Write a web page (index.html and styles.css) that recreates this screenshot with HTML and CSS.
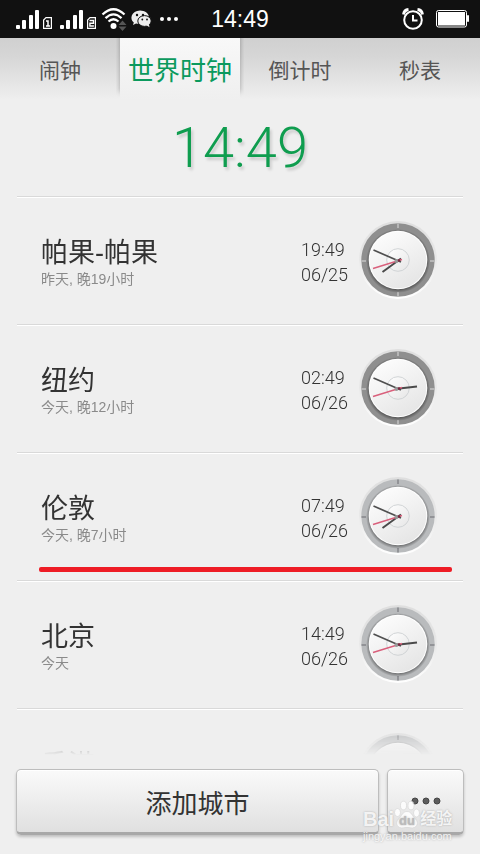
FILE: index.html
```html
<!DOCTYPE html>
<html lang="zh-CN">
<head>
    <meta charset="UTF-8">
    <meta name="viewport" content="width=device-width, initial-scale=1.0">
    <title>世界时钟</title>
    <link rel="stylesheet" href="styles.css">
</head>
<body>
    <!-- shared clock parts -->
    <svg class="defs" width="0" height="0" aria-hidden="true">
        <defs>
            <linearGradient id="halo" x1="0" y1="0" x2="0" y2="1">
                <stop offset="0" stop-color="#dedede"/>
                <stop offset="0.5" stop-color="#e8e8e8"/>
                <stop offset="1" stop-color="#fff"/>
            </linearGradient>
            <linearGradient id="dial" x1="0.2" y1="0" x2="0.8" y2="1">
                <stop offset="0" stop-color="#fdfdfd"/>
                <stop offset="1" stop-color="#e4e4e4"/>
            </linearGradient>
            <linearGradient id="hub" x1="0" y1="0" x2="1" y2="1">
                <stop offset="0" stop-color="#fff"/>
                <stop offset="1" stop-color="#e6e6e6"/>
            </linearGradient>
            <radialGradient id="drop">
                <stop offset="0.88" stop-color="#000" stop-opacity="0.4"/>
                <stop offset="1" stop-color="#000" stop-opacity="0"/>
            </radialGradient>
            <g id="face">
                <circle cx="40" cy="41" r="32" fill="url(#drop)"/>
                <circle cx="40" cy="40" r="29.3" fill="#fff"/>
                <circle cx="40" cy="40" r="28.3" fill="url(#dial)"/>
                <circle cx="40" cy="40" r="11.3" fill="url(#hub)" stroke="#cdd0d3" stroke-width="0.9"/>
            </g>
            <g id="hands">
                <path d="M15 48.500L44 39.500" stroke="#d9607c" stroke-width="1.400"/>
                <path d="M15.500 30L43 42" stroke="#505050" stroke-width="1.700"/>
                <circle cx="38.500" cy="41" r="2" fill="#999"/>
                <circle cx="41" cy="40.500" r="1.200" fill="#7c2740"/>
            </g>
        </defs>
    </svg>

    <div class="screen">
        <header class="status">
            <div class="status-left">
                <svg width="180" height="38" viewBox="0 0 180 38" aria-label="信号">
                    <g fill="#fff">
                        <rect x="16" y="25" width="4" height="4" rx="1"/>
                        <rect x="22" y="20" width="4" height="9" rx="1"/>
                        <rect x="29" y="15" width="4" height="14" rx="1"/>
                        <rect x="35" y="10" width="4" height="19" rx="1"/>
                        <rect x="60" y="25" width="4" height="4" rx="1"/>
                        <rect x="66" y="20" width="4" height="9" rx="1"/>
                        <rect x="73" y="15" width="4" height="14" rx="1"/>
                        <rect x="79" y="10" width="4" height="19" rx="1"/>
                    </g>
                    <g fill="none" stroke="#fff" stroke-width="1.200">
                        <path d="M46 17.600h5.400v10.800h-7.800v-8.400z"/>
                        <path d="M90 17.600h5.400v10.800h-7.800v-8.400z"/>
                        <path d="M46 21h2v5M46 26h4" stroke-width="1.500"/>
                        <path d="M89.500 20.500h4v2.700h-3.600v2.800h4" stroke-width="1.400"/>
                    </g>
                    <g fill="none" stroke="#fff" stroke-width="2.300">
                        <path d="M102.500 14.500Q113.500 4 124.500 14.500"/>
                        <path d="M105.500 18.200Q113.500 10.500 121.500 18.200"/>
                        <path d="M108.500 21.500Q113.500 17 118.500 21.500"/>
                    </g>
                    <circle cx="113.500" cy="26" r="3" fill="#fff"/>
                    <path d="M122.500 20.500l4 4.500h-8zM122.500 31l4-4.500h-8z" fill="#555"/>
                    <g fill="#eee">
                        <path d="M140 10.500c4.800 0 8.600 2.800 8.900 6.300-5-.6-9.400 2.500-8.900 7.200-1.500.1-2.700-.1-4-.4l-3 1.400.8-2.500c-4.600-3.400-2.400-12 6.200-12z"/>
                        <ellipse cx="144.500" cy="21" rx="6.700" ry="5.400" stroke="#111"/>
                        <path d="M146 25l3.500 2.200-.6-3.200z"/>
                    </g>
                    <g fill="#111">
                        <circle cx="137" cy="15" r="1.200"/>
                        <circle cx="143" cy="15" r="1.200"/>
                        <circle cx="142.300" cy="19.500" r="0.900"/>
                        <circle cx="147" cy="19.500" r="0.900"/>
                    </g>
                    <g fill="#fff">
                        <circle cx="162" cy="19" r="2"/>
                        <circle cx="169" cy="19" r="2"/>
                        <circle cx="176" cy="19" r="2"/>
                    </g>
                </svg>
            </div>
            <time class="status-time">14:49</time>
            <div class="status-right">
                <svg width="22" height="22" viewBox="0 0 22 22" fill="none" stroke="#fff" aria-label="闹钟">
                    <circle cx="11" cy="12" r="8.800" stroke-width="2"/>
                    <path d="M11 7v5.500h4.500" stroke-width="2"/>
                    <path d="M1.500 6.500Q2 2 6.500 1.500M15.500 1.500Q20 2 20.500 6.500" stroke-width="2.800"/>
                </svg>
                <svg width="34" height="18" viewBox="0 0 34 18" aria-label="电量">
                    <rect x="0.500" y="0.500" width="30" height="16.500" rx="2" fill="none" stroke="#fff"/>
                    <rect x="2" y="2" width="27" height="13.500" fill="#fff"/>
                    <rect x="31" y="5" width="2" height="7" rx="1" fill="#fff"/>
                </svg>
            </div>
        </header>

        <nav class="tabs">
            <button class="tab">闹钟</button>
            <button class="tab active">世界时钟</button>
            <button class="tab">倒计时</button>
            <button class="tab">秒表</button>
        </nav>

        <time class="current">14:49</time>

        <ul class="cities">
            <li class="city">
                <div class="place">
                    <h2>帕果-帕果</h2>
                    <p>昨天, 晚19小时</p>
                </div>
                <div class="when">19:49<br>06/25</div>
                <svg class="clock night" viewBox="0 0 80 80" aria-hidden="true">
                    <circle cx="40" cy="40" r="39" fill="url(#halo)"/>
                    <circle class="ring" cx="40" cy="40" r="36.700"/>
                    <path class="ticks" d="M40 3.500v4.500M40 72v4.500M3.500 41h4.500M72 41h4.500"/>
                    <use href="#face"/>
                    <path class="hour" d="M24.500 52L43 38.500"/>
                    <use href="#hands"/>
                </svg>
            </li>
            <li class="city">
                <div class="place">
                    <h2>纽约</h2>
                    <p>今天, 晚12小时</p>
                </div>
                <div class="when">02:49<br>06/26</div>
                <svg class="clock night" viewBox="0 0 80 80" aria-hidden="true">
                    <circle cx="40" cy="40" r="39" fill="url(#halo)"/>
                    <circle class="ring" cx="40" cy="40" r="36.700"/>
                    <path class="ticks" d="M40 3.500v4.500M40 72v4.500M3.500 41h4.500M72 41h4.500"/>
                    <use href="#face"/>
                    <path class="hour" d="M59 38.500L37 41"/>
                    <use href="#hands"/>
                </svg>
            </li>
            <li class="city marked">
                <div class="place">
                    <h2>伦敦</h2>
                    <p>今天, 晚7小时</p>
                </div>
                <div class="when">07:49<br>06/26</div>
                <svg class="clock" viewBox="0 0 80 80" aria-hidden="true">
                    <circle cx="40" cy="40" r="39" fill="url(#halo)"/>
                    <circle class="ring" cx="40" cy="40" r="36.700"/>
                    <path class="ticks" d="M40 3.500v4.500M40 72v4.500M3.500 41h4.500M72 41h4.500"/>
                    <use href="#face"/>
                    <path class="hour" d="M24.500 52L43 38.500"/>
                    <use href="#hands"/>
                </svg>
            </li>
            <li class="city">
                <div class="place">
                    <h2>北京</h2>
                    <p>今天</p>
                </div>
                <div class="when">14:49<br>06/26</div>
                <svg class="clock" viewBox="0 0 80 80" aria-hidden="true">
                    <circle cx="40" cy="40" r="39" fill="url(#halo)"/>
                    <circle class="ring" cx="40" cy="40" r="36.700"/>
                    <path class="ticks" d="M40 3.500v4.500M40 72v4.500M3.500 41h4.500M72 41h4.500"/>
                    <use href="#face"/>
                    <path class="hour" d="M59 38.500L37 41"/>
                    <use href="#hands"/>
                </svg>
            </li>
            <li class="city">
                <div class="place">
                    <h2>香港</h2>
                </div>
                <svg class="clock" viewBox="0 0 80 80" aria-hidden="true">
                    <circle cx="40" cy="40" r="39" fill="url(#halo)"/>
                    <circle class="ring" cx="40" cy="40" r="36.700"/>
                    <path class="ticks" d="M40 3.500v4.500M40 72v4.500M3.500 41h4.500M72 41h4.500"/>
                    <use href="#face"/>
                </svg>
            </li>
        </ul>

        <footer class="actions">
            <button class="btn add">添加城市</button>
            <button class="btn more" aria-label="更多">
                <svg width="30" height="8" viewBox="0 0 30 8" fill="#5c5c5c" stroke="#444" aria-hidden="true">
                    <circle cx="4" cy="4" r="3"/>
                    <circle cx="15" cy="4" r="3"/>
                    <circle cx="26" cy="4" r="3"/>
                </svg>
            </button>
        </footer>

        <div class="watermark">
            <div class="brand">
                <span>Bai</span>
                <svg width="26" height="30" viewBox="0 0 26 30" aria-hidden="true">
                    <g class="paw">
                        <ellipse cx="3.500" cy="12.500" rx="3" ry="4"/>
                        <ellipse cx="9.500" cy="5.500" rx="3" ry="4.300"/>
                        <ellipse cx="17" cy="5.500" rx="3" ry="4.300"/>
                        <ellipse cx="22.500" cy="13" rx="3" ry="4"/>
                        <path d="M13 11.500c4.500 0 5 4.500 8.500 7.500 4 4 1 10-5 8.700q-3.500-.7-7 0c-6 1.300-9-4.700-5-8.700 3.500-3 4-7.500 8.500-7.500z"/>
                    </g>
                    <text class="du" x="13" y="25" text-anchor="middle">du</text>
                </svg>
                <span class="cn">经验</span>
            </div>
            <div class="url">jingyan.baidu.com</div>
        </div>
    </div>
</body>
</html>
```
FILE: styles.css
```css
* { box-sizing: border-box; margin: 0; padding: 0; }
body { background: #efefef; font-family: "Liberation Sans", "Noto Sans CJK SC", sans-serif; color: #333; }
button { border: 0; background: none; font-family: inherit; color: inherit; cursor: pointer; }
svg { display: block; flex: none; }
.defs { position: absolute; }
.screen { position: relative; height: 100vh; display: flex; flex-direction: column; overflow: hidden; }

/* status bar */
.status { height: 38px; flex: none; display: grid; grid-template-columns: 1fr auto 1fr; align-items: center; background: #111; color: #fff; }
.status-left { display: flex; }
.status-time { font-size: 23px; line-height: 38px; }
.status-right { display: flex; justify-content: flex-end; align-items: center; gap: 12px; padding-right: 10px; }

/* tabs */
.tabs { height: 62px; flex: none; display: grid; grid-template-columns: repeat(4, 1fr); background: linear-gradient(#d0d0d0, #d6d6d6 30%, #efefef); }
.tab { font-size: 21px; color: #555; padding-top: 4px; line-height: 58px; white-space: nowrap; }
.tab.active { font-size: 26px; color: #0b9a5e; background: linear-gradient(#f8f8f8, #efefef); box-shadow: 0 -8px 5px rgba(0, 0, 0, 0.3); clip-path: inset(0 -4px); }

.current { flex: none; height: 96px; line-height: 96px; text-align: center; font-family: Roboto, sans-serif; font-weight: 300; font-size: 56px; color: #0f9d4f; text-shadow: 2px 3px 3px rgba(0, 0, 0, 0.15); }

/* city list, fades out above the buttons */
.cities { flex: 1; min-height: 0; margin: 0 17px; overflow: hidden; list-style: none; -webkit-mask-image: linear-gradient(#000 calc(100% - 30px), transparent); mask-image: linear-gradient(#000 calc(100% - 30px), transparent); }
.city { position: relative; height: 128px; display: flex; align-items: flex-start; border-top: 1px solid #d9d9d9; box-shadow: inset 0 1px #fff; padding: 0 25px 0 24px; }
.place { flex: 1; padding-top: 39px; }
.place h2 { font-size: 27px; line-height: 34px; font-weight: 400; }
.place p { font-size: 14px; line-height: 18px; color: #8a8a8a; }
.when { padding-top: 40px; margin-right: 9px; width: 48px; font-family: Roboto, sans-serif; font-weight: 300; font-size: 18px; line-height: 25px; color: #333; white-space: nowrap; }
.clock { width: 80px; height: 80px; margin-top: 23px; }
.ring { fill: #b9bbbd; }
.ticks { stroke: #85878a; stroke-width: 1.5; }
.night .ring { fill: #8f8f8f; }
.night .ticks { stroke: #c4c4c4; }
.hour { stroke: #4a4a4a; stroke-width: 2; }
.marked::after { content: ""; position: absolute; left: 22px; right: 11px; bottom: 8px; height: 5px; border-radius: 2px; background: #ee1c25; }

/* bottom buttons */
.actions { flex: none; display: flex; gap: 8px; padding: 14px 16px 19px; }
.btn { height: 66px; display: flex; align-items: center; justify-content: center; border: 1px solid #bdbdbd; border-bottom: 3px solid #a8a8a8; border-radius: 5px; background: linear-gradient(#fafafa, #e0e0e0); box-shadow: inset 0 1px #fff, 0 2px 3px rgba(0, 0, 0, 0.2); }
.add { flex: 1; font-size: 26px; }
.more { width: 77px; }

/* watermark */
.watermark { position: absolute; right: 28px; bottom: 12px; width: 89px; color: rgba(255, 255, 255, 0.85); text-shadow: 0 0 2px #aaa; white-space: nowrap; pointer-events: none; }
.brand { display: flex; align-items: flex-end; font-size: 20px; line-height: 22px; font-weight: 700; }
.cn { font-size: 16px; }
.paw { fill: #fff; fill-opacity: 0.85; stroke: #ccc; stroke-width: 0.5; }
.du { font-size: 13px; font-weight: 700; fill: #bbb; }
.url { font-size: 11px; line-height: 12px; }
```
